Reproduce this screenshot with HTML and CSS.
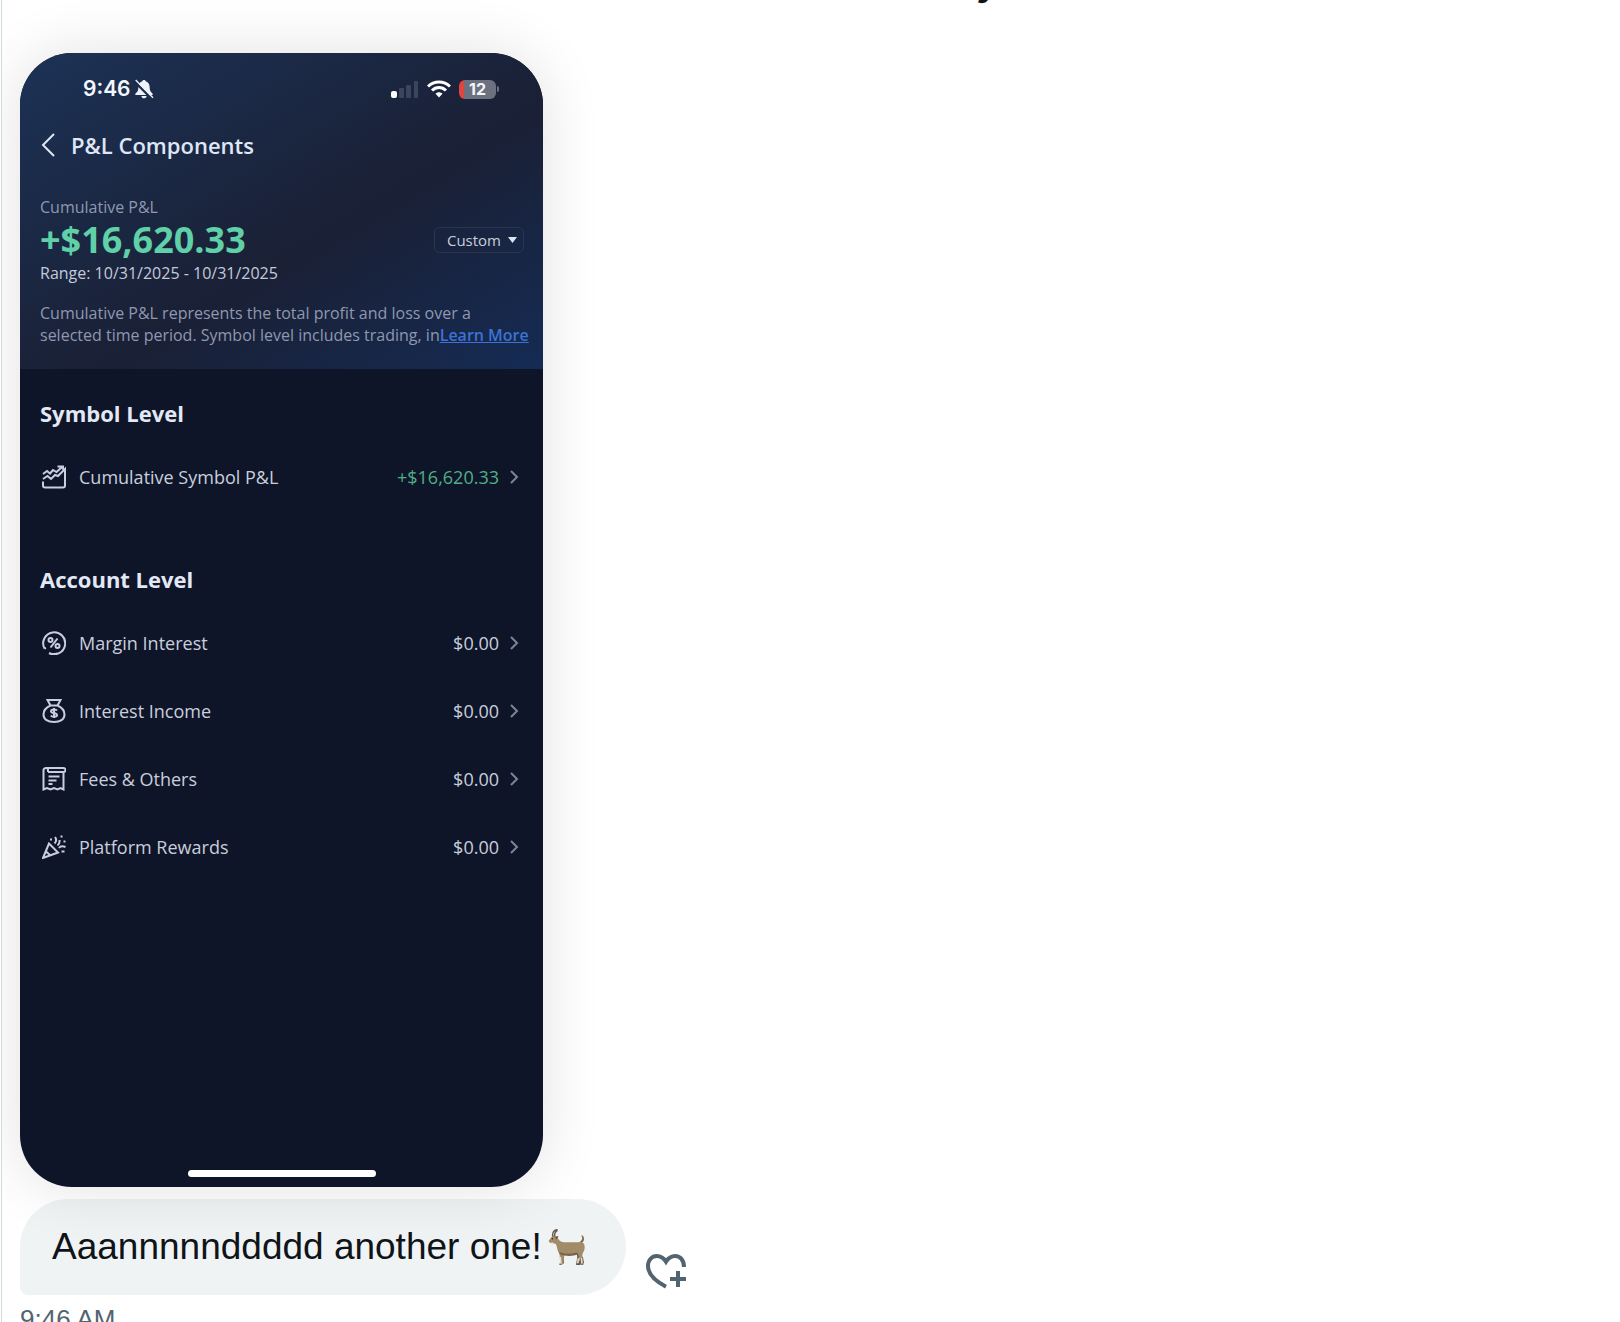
FILE: index.html
```html
<!DOCTYPE html>
<html lang="en">
<head>
<meta charset="utf-8">
<meta name="viewport" content="width=device-width, initial-scale=1">
<title>Messages</title>
<link rel="stylesheet" href="styles.css">
</head>
<body>
<main class="conversation">
  <header class="topline"><span>y</span></header>

  <article class="phone">
    <section class="hero">
      <div class="status">
        <span class="clock">9:46</span>
        <svg class="bell" width="20" height="20" viewBox="0 0 60 60" aria-hidden="true">
          <path d="M30 3c-3 0-5 2-5 4-9 3-12 10-12 19 0 10-4 13-9 18v4h52v-4c-5-5-9-8-9-18 0-9-3-16-12-19 0-2-2-4-5-4zM22 51h16c-1 5-4 7-8 7s-7-2-8-7z" fill="#eef2fa"/>
          <path d="M2 8l50 50" stroke="#1b2b4c" stroke-width="7"/>
          <path d="M5 3l52 53" stroke="#eef2fa" stroke-width="4"/>
        </svg>
        <span class="indicators">
          <svg width="28" height="18" viewBox="0 0 28 18" aria-hidden="true">
            <rect x="0" y="11" width="6" height="7" rx="2" fill="#fff"/>
            <rect x="8" y="8" width="5" height="10" rx="1" fill="#3b455e"/>
            <rect x="15" y="5" width="5" height="13" rx="1" fill="#3b455e"/>
            <rect x="23" y="1" width="4" height="17" rx="1" fill="#3b455e"/>
          </svg>
          <svg width="24" height="18" viewBox="0 0 24 18" fill="none" stroke="#fff" stroke-width="3" aria-hidden="true">
            <path d="M1 6.500C7 .5 17 .5 23 6.500M5 10.500c4-4 10-4 14 0"/>
            <path d="M12 17.500l-3.500-3.800c2-2 5-2 7 0z" fill="#fff" stroke="none"/>
          </svg>
          <span class="battery">12</span>
        </span>
      </div>

      <div class="titlebar">
        <button class="back" type="button" aria-label="Back">
          <svg width="16" height="26" viewBox="0 0 16 26" fill="none" stroke="#dfe6f5" stroke-width="2"><path d="M14 2L3 13l11 11"/></svg>
        </button>
        <h1>P&amp;L Components</h1>
      </div>

      <div class="total">
        <div>
          <p class="caption">Cumulative P&amp;L</p>
          <p class="amount">+$16,620.33</p>
          <p class="range">Range: 10/31/2025 - 10/31/2025</p>
        </div>
        <button class="custom" type="button">Custom
          <svg width="9" height="6" viewBox="0 0 9 6" aria-hidden="true"><path d="M0 0h9L4.500 6z" fill="#dde3f0"/></svg>
        </button>
      </div>

      <p class="about">Cumulative P&amp;L represents the total profit and loss over a <span class="tail">selected time period. Symbol level includes trading, in<a href="#more">Learn More</a></span></p>
    </section>

    <section class="group">
      <h2>Symbol Level</h2>
      <ul>
        <li>
          <svg class="icon" viewBox="0 0 24 24"><path d="M1 9l4-3 3 2.500 3-3.500 3.500 2L20 2M15.500 1.500H22M1 14l4.500-3 3.500 3 4-4 3 1 7-7v16.500q0 2-2 2H3q-2 0-2-2v-4"/><path d="M16 1h6v5z" fill="#c8cedd" stroke="none"/></svg>
          <span class="label">Cumulative Symbol P&amp;L</span><span class="value gain">+$16,620.33</span>
          <svg class="chevron" viewBox="0 0 9 16"><path d="M1 2l6 6-6 6"/></svg>
        </li>
      </ul>
    </section>

    <section class="group account">
      <h2>Account Level</h2>
      <ul>
        <li>
          <svg class="icon" viewBox="0 0 24 24"><path d="M2.500 17.500A11 11 0 1 1 7 22M10 23a11 11 0 0 0 5-.5M2.500 17.500L4 17M15.500 7.500l-7 9"/><circle cx="8.500" cy="9" r="2"/><circle cx="15.500" cy="15" r="2"/></svg>
          <span class="label">Margin Interest</span><span class="value">$0.00</span>
          <svg class="chevron" viewBox="0 0 9 16"><path d="M1 2l6 6-6 6"/></svg>
        </li>
        <li>
          <svg class="icon" viewBox="0 0 24 24"><path d="M5.500 1h13l-3 5.500h-7zM8.500 6.500C4 8.500 1.500 12 1.500 15.500c0 5 4.500 7.500 10.500 7.500s10.500-2.500 10.500-7.500c0-3.500-2.500-7-7-9"/><path d="M15 11.500c-1-1.500-6-1.500-6 .7 0 2.500 6 1.300 6 3.800 0 2.300-5 2.300-6.200.5M12 9v10" stroke-width="2"/></svg>
          <span class="label">Interest Income</span><span class="value">$0.00</span>
          <svg class="chevron" viewBox="0 0 9 16"><path d="M1 2l6 6-6 6"/></svg>
        </li>
        <li>
          <svg class="icon" viewBox="0 0 24 24"><path d="M6 5V3q0-2-2-2T1.500 3v19.500l3.500-1.500 3.500 1.500L12 21l3.500 1.500 3-1.500 3 1.500V5M4 1h17q2.500 0 2.500 2T21.500 5H6M6.500 9.500h11M6.500 13.500h8M6.500 17h4"/></svg>
          <span class="label">Fees &amp; Others</span><span class="value">$0.00</span>
          <svg class="chevron" viewBox="0 0 9 16"><path d="M1 2l6 6-6 6"/></svg>
        </li>
        <li>
          <svg class="icon" viewBox="0 0 24 24"><path d="M7 8.500L1 23l15-5.500zM4 16.500l4.500 4M12.500 8.500q3-3 .5-6.500M15.500 10.500Q18 9 17.500 5M17 13q2-3 6.500-1"/><path d="M8 4.500h2M18.500 1.500h2M21.500 6.500h2M19.500 16.500h3" stroke-width="2"/></svg>
          <span class="label">Platform Rewards</span><span class="value">$0.00</span>
          <svg class="chevron" viewBox="0 0 9 16"><path d="M1 2l6 6-6 6"/></svg>
        </li>
      </ul>
    </section>
    <div class="home"></div>
  </article>

  <div class="message">
    <p class="bubble">Aaannnnnddddd another one!
      <svg class="goat" role="img" aria-label="goat" width="38" height="36" viewBox="0 0 115 108">
        <path d="M89 66l3 18-3 20h7l6-20 4 20" fill="none" stroke="#6d5a46" stroke-width="7"/>
        <path d="M43 72l2 32" stroke="#6d5a46" stroke-width="7"/>
        <path d="M99 43c7-2 12-8 9-19-1-4-5-6-8-4 6 4 4 13-3 18z" fill="#806b50"/>
        <path d="M2 35l12-15c7-2 14 2 17 10 6 8 12 10 24 10h36c13-3 20 3 20 14 0 9-3 14-6 19l-2 13h-9l-4-14c-12 7-28 6-40 2l-4 28h-9l-2-27c-7-7-7-20-11-30L13 42l-8-1z" fill="#a18b68"/>
        <path d="M34 75c12 6 38 9 56 2l-2-6c-18 5-38 4-53-2z" fill="#79654d"/>
        <path d="M37 84l2 20M101 86l2 18M92 88l-2 16" stroke="#e8ddcc" stroke-width="5"/>
        <path d="M34 106h9M86 106h10M99 106h8" stroke="#4a3d33" stroke-width="3"/>
        <path d="M14 22C13 10 19 2 29 1M20 22c-1-9 2-15 9-18" fill="none" stroke="#66594c" stroke-width="4"/>
        <path d="M22 23l10-2-6 10z" fill="#5e4d3c"/>
        <path d="M9 41l7-1-3 11z" fill="#e9e2d6"/>
        <circle cx="13" cy="29" r="2" fill="#251d18"/>
      </svg>
    </p>
    <button class="react" type="button" aria-label="Add reaction">
      <svg width="40" height="35" viewBox="0 0 120 105" fill="none" stroke="#536471" stroke-width="12">
        <path d="M114 39C114 18 102 6 88 6 76 6 66 13 60 23 54 13 44 6 32 6 18 6 6 18 6 36 6 58 24 79 60 98"/>
        <path d="M96 51v48M72 75h48"/>
      </svg>
    </button>
  </div>
  <time class="sent">9:46 AM</time>
</main>
</body>
</html>
```
FILE: styles.css
```css
* {
  box-sizing: border-box;
}

body,
h1,
h2,
p,
ul {
  margin: 0;
  padding: 0;
}

body {
  background: #fff;
  font-family: "Open Sans", "Noto Sans", sans-serif;
}

button {
  padding: 0;
  border: 0;
  background: none;
  color: inherit;
  font: inherit;
}

svg {
  display: block;
  flex: none;
}

.conversation {
  height: 100vh;
  overflow: hidden;
  margin-left: 1px;
  padding-left: 18px;
  border-left: 1px solid #cfd9de;
}

.topline {
  display: flex;
  align-items: flex-end;
  height: 5px;
  margin-bottom: 48px;
  padding-left: calc(60% - 4px);
  overflow: hidden;
  color: #0f1419;
  font: 700 36px/44px Inter, sans-serif;
}

.phone {
  position: relative;
  z-index: 1;
  display: flex;
  flex-direction: column;
  width: 523px;
  max-width: 100%;
  min-height: 1134px;
  border-radius: 52px;
  background: #0f1528;
  box-shadow: 0 0 60px rgba(0, 0, 0, 0.12);
  color: #c8cedd;
}

.hero {
  padding: 22px 19px 23px 20px;
  border-radius: 52px 52px 0 0;
  background: linear-gradient(149deg, #1c3256, #1a2035 58%, #152b54);
}

.status {
  display: flex;
  align-items: center;
  height: 28px;
  padding: 0 28px 0 43px;
  color: #f4f7fd;
  font: 600 21px/28px Inter, sans-serif;
}

.bell {
  margin-left: 3px;
}

.indicators {
  display: flex;
  align-items: center;
  gap: 8px;
  margin-left: auto;
}

.battery {
  position: relative;
  width: 37px;
  height: 19px;
  border-radius: 6px;
  background: linear-gradient(90deg, #e0453f 5px, #6c7180 5px);
  font: 700 16px/19px Inter, sans-serif;
  text-align: center;
}

.battery::after {
  content: "";
  position: absolute;
  top: 6px;
  right: -3px;
  width: 2px;
  height: 6px;
  border-radius: 0 2px 2px 0;
  background: #6c7180;
}

.titlebar {
  display: flex;
  align-items: center;
  gap: 15px;
  height: 32px;
  margin-top: 26px;
}

h1 {
  color: #dfe6f5;
  font-size: 22px;
  font-weight: 600;
  line-height: 32px;
}

.total {
  display: flex;
  align-items: center;
  justify-content: space-between;
  margin-top: 35px;
}

.caption,
.range,
.about {
  color: #8f98b0;
  font-size: 16px;
  line-height: 22px;
}

.amount {
  color: #5fd0a8;
  font-size: 36px;
  font-weight: 700;
  line-height: 44px;
}

.range {
  color: #c3cadb;
}

.custom {
  display: flex;
  align-items: center;
  justify-content: flex-end;
  gap: 7px;
  width: 90px;
  height: 26px;
  padding-right: 6px;
  border: 1px solid #2a3550;
  border-radius: 6px;
  color: #c8cedd;
  font-size: 15px;
}

.about {
  margin-top: 18px;
}

.tail {
  white-space: nowrap;
}

.about a {
  color: #3c72d4;
  font-weight: 600;
}

.group {
  padding: 28px 20px 0;
}

.account {
  padding-top: 52px;
}

h2 {
  margin-bottom: 14px;
  color: #e2e8f5;
  font-size: 22px;
  font-weight: 700;
  line-height: 32px;
}

li {
  display: flex;
  align-items: center;
  height: 68px;
  padding: 0 4px 0 2px;
  font-size: 18px;
  list-style: none;
}

.icon {
  width: 24px;
  height: 24px;
  margin-right: 13px;
  fill: none;
  stroke: #c8cedd;
  stroke-width: 2;
}

.value {
  margin-left: auto;
}

.gain {
  color: #4fae87;
}

.chevron {
  width: 9px;
  height: 16px;
  margin-left: 11px;
  fill: none;
  stroke: #7c8499;
  stroke-width: 2;
}

.home {
  width: 188px;
  height: 7px;
  margin: auto auto 10px;
  border-radius: 4px;
  background: #fff;
}

.message {
  display: flex;
  align-items: flex-end;
  gap: 20px;
  margin-top: 12px;
}

.bubble {
  display: flex;
  align-items: center;
  gap: 6px;
  height: 96px;
  padding: 0 40px 0 32px;
  border-radius: 48px 48px 48px 8px;
  background: #eff3f4;
  color: #0f1419;
  font: 400 37px/48px "Liberation Sans", Arial, sans-serif;
}

.react {
  margin-bottom: 6px;
}

.sent {
  display: block;
  margin-top: 8px;
  color: #536471;
  font: 400 26px/32px "Liberation Sans", Arial, sans-serif;
}
```
